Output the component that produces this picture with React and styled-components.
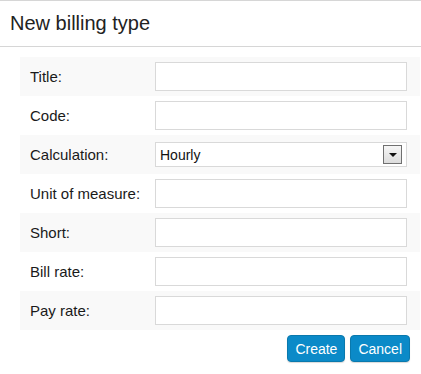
import React from 'react';
import styled, { createGlobalStyle } from 'styled-components';

const GlobalStyle = createGlobalStyle`
    html, body {
        margin: 0;
        padding: 0;
        background: #fff;
    }
    body {
        font-family: "Liberation Sans", Arial, sans-serif;
        color: #222;
    }
`;

const Dialog = styled.div`
    width: 421px;
    height: 374px;
    border-top: 1px solid #d6d6d6;
    box-sizing: border-box;
`;

const Header = styled.h1`
    margin: 0;
    height: 45px;
    padding: 0 10px;
    display: flex;
    align-items: center;
    font-size: 20px;
    font-weight: 400;
    color: #222;
    border-bottom: 1px solid #d6d6d6;
`;

const Form = styled.div`
    margin: 10px 1px 0 20px;
`;

const Row = styled.div`
    display: flex;
    align-items: center;
    height: 39px;
    padding: 0 0 0 10px;
    background: ${p => (p.shaded ? '#f9f9f9' : '#fff')};
`;

const Label = styled.label`
    width: 125px;
    flex-shrink: 0;
    font-size: 15px;
    color: #1a1a1a;
`;

const Input = styled.input`
    width: 252px;
    height: 29px;
    flex-shrink: 0;
    box-sizing: border-box;
    border: 1px solid #d9d9d9;
    background: #fff;
    margin: 0;
    padding: 0 4px;
`;

const Select = styled.div`
    width: 252px;
    height: 25px;
    flex-shrink: 0;
    box-sizing: border-box;
    border: 1px solid #d9d9d9;
    background: #fff;
    display: flex;
    align-items: center;
    justify-content: space-between;
    padding: 0 4px 0 4px;
    font-size: 14px;
    color: #111;
`;

const Arrow = styled.span`
    width: 19px;
    height: 19px;
    box-sizing: border-box;
    border: 1px solid #707070;
    background: linear-gradient(#f6f6f6, #dcdcdc);
    display: flex;
    align-items: center;
    justify-content: center;
    &::after {
        content: '';
        border-left: 4px solid transparent;
        border-right: 4px solid transparent;
        border-top: 4px solid #111;
        margin-top: 1px;
    }
`;

const Actions = styled.div`
    display: flex;
    justify-content: flex-end;
    gap: 5px;
    padding: 5px 11px 0 0;
`;

const Button = styled.button`
    height: 27px;
    padding: 0 7px;
    border: 1px solid #0a79ad;
    border-radius: 4px;
    background: #0b8ac8;
    color: #fff;
    font-family: "Liberation Sans", Arial, sans-serif;
    font-size: 14px;
    box-shadow: 0 1px 1px rgba(0, 0, 0, 0.15);
`;

const fields = [
    'Title:',
    'Code:',
    'Calculation:',
    'Unit of measure:',
    'Short:',
    'Bill rate:',
    'Pay rate:',
];

export default function App() {
    return (
        <Dialog>
            <GlobalStyle />
            <Header>New billing type</Header>
            <Form>
                {fields.map((f, i) => (
                    <Row key={f} shaded={i % 2 === 0}>
                        <Label>{f}</Label>
                        {f === 'Calculation:' ? (
                            <Select>
                                Hourly
                                <Arrow />
                            </Select>
                        ) : (
                            <Input />
                        )}
                    </Row>
                ))}
            </Form>
            <Actions>
                <Button>Create</Button>
                <Button>Cancel</Button>
            </Actions>
        </Dialog>
    );
}
